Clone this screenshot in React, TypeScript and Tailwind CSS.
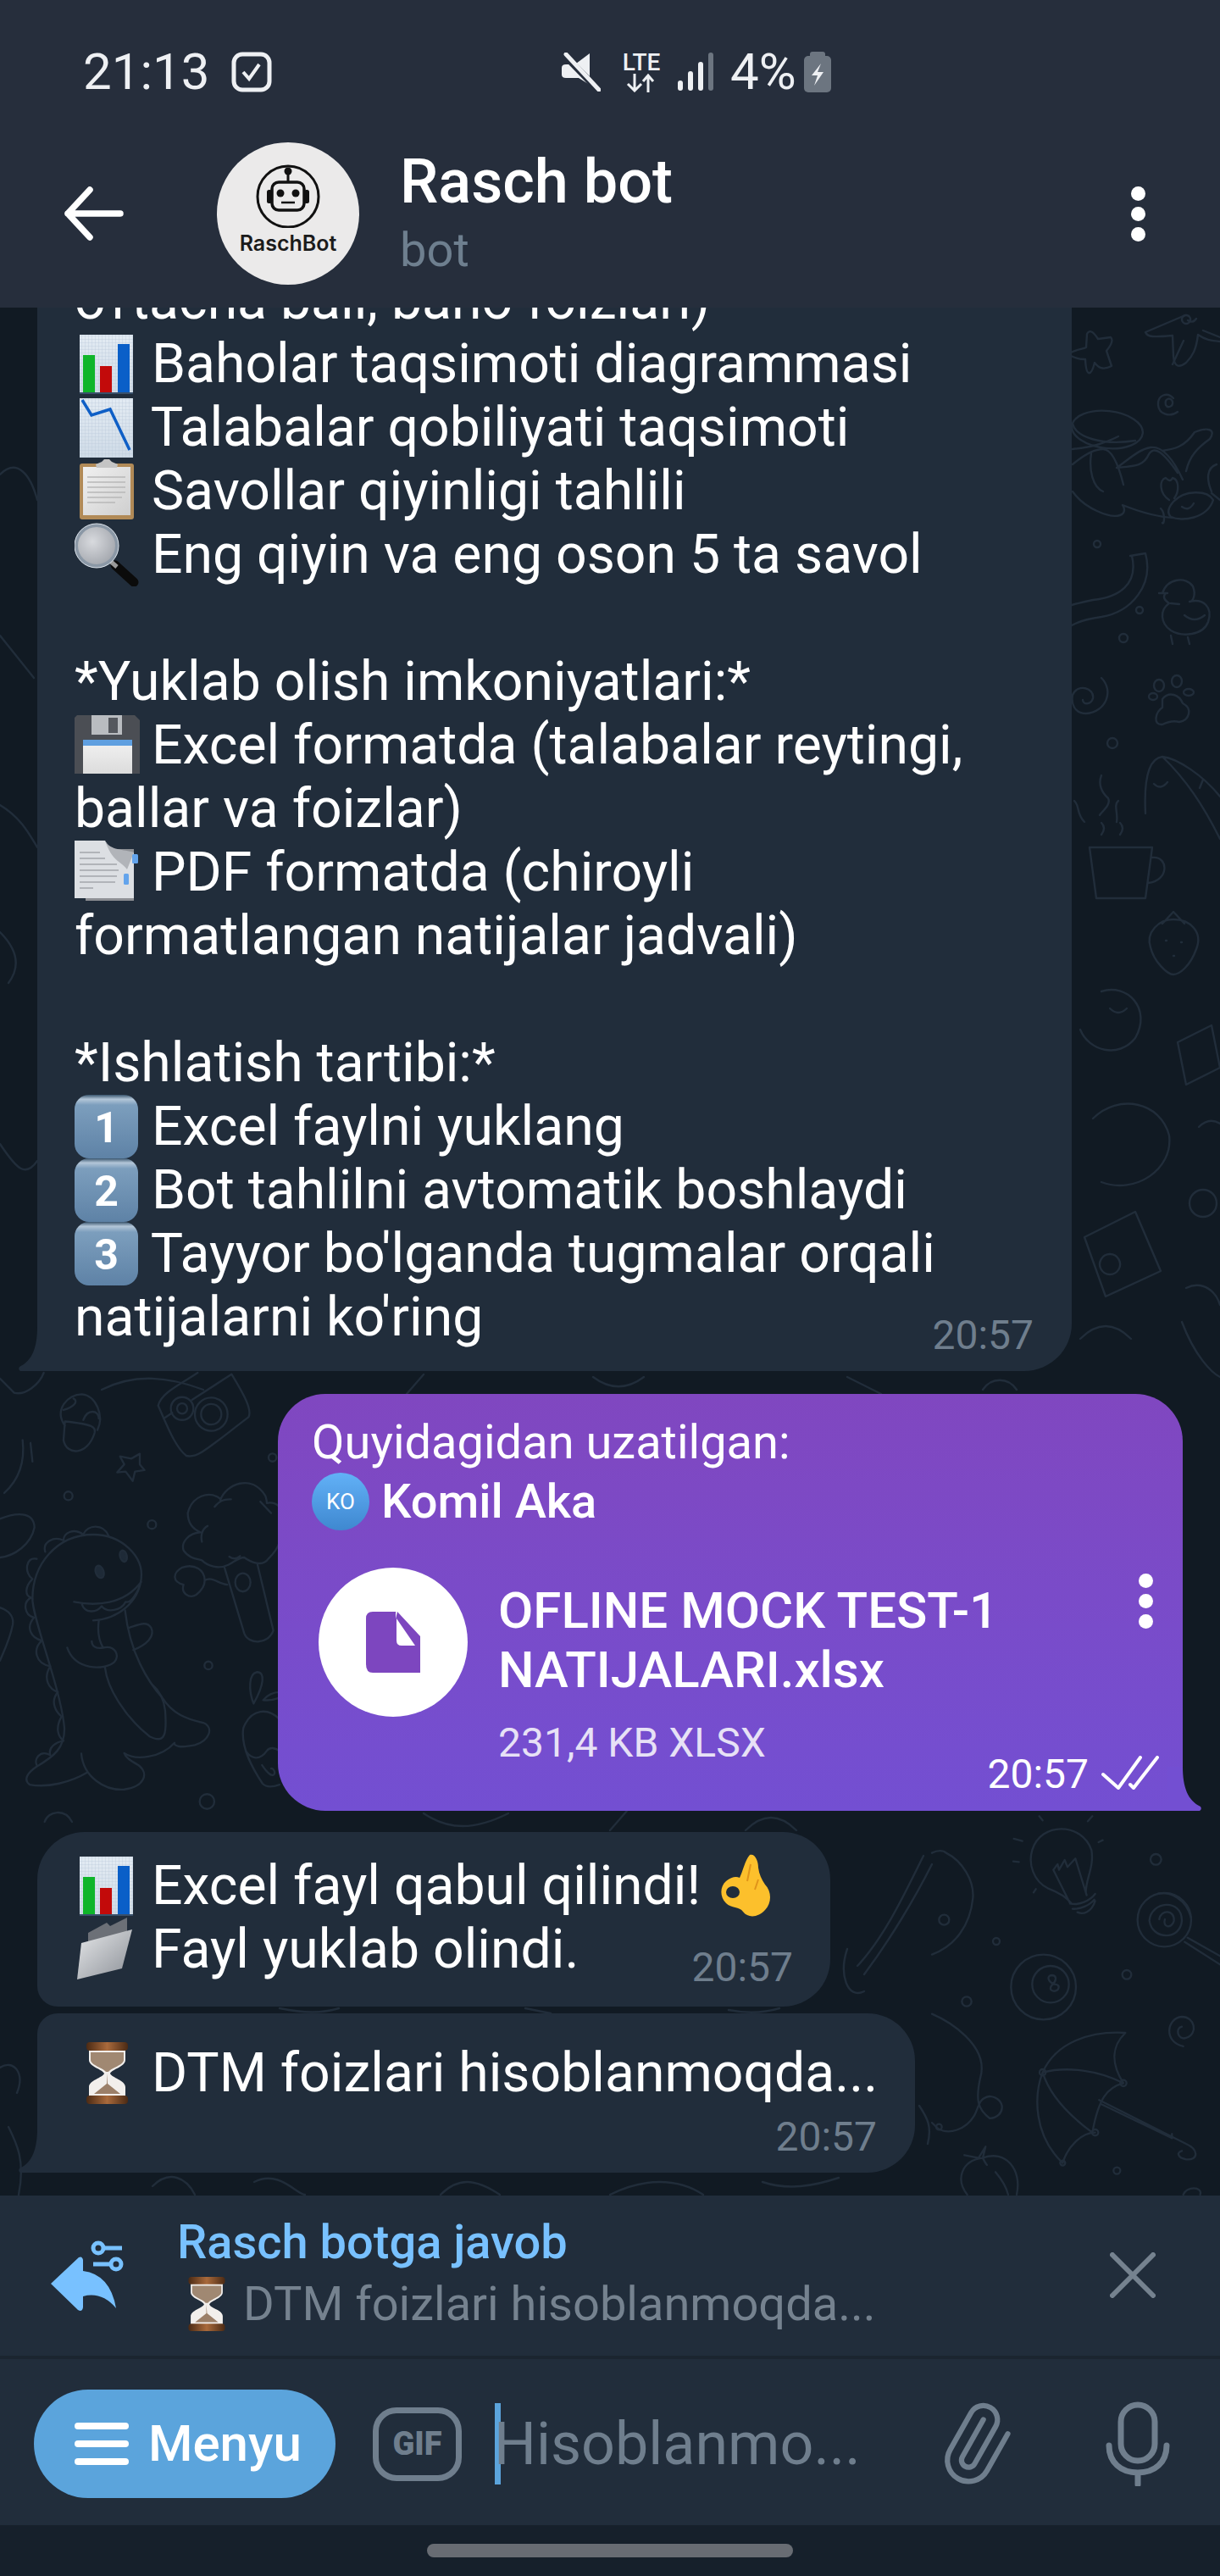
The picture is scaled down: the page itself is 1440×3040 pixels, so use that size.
import React from "react";

const BUBBLE = "#212d3b";

function Paper({ id }: { id: string }) {
  return (
    <>
      <defs>
        <linearGradient id={id} x1="0" y1="0" x2="0" y2="1">
          <stop offset="0" stopColor="#e3ebf3" />
          <stop offset="1" stopColor="#cfdbe7" />
        </linearGradient>
        <pattern id={id + "g"} width="4" height="4" patternUnits="userSpaceOnUse">
          <path d="M4 0H0V4" fill="none" stroke="#b9c8d8" strokeWidth="0.7" />
        </pattern>
      </defs>
      <rect x="6" y="3" width="63" height="70" fill={`url(#${id})`} />
      <rect x="6" y="3" width="63" height="70" fill={`url(#${id}g)`} />
    </>
  );
}

const emojiCls = "inline-block align-top mr-[-2px]";

function BarChart() {
  return (
    <svg width="77" height="75" viewBox="0 0 77 75" className={emojiCls}>
      <Paper id="pa" />
      <rect x="10" y="27" width="14" height="45" fill="#0fb52a" />
      <rect x="30" y="40" width="14" height="32" fill="#c20a0a" />
      <rect x="51" y="14" width="14" height="58" fill="#0a5fc8" />
      <rect x="6" y="71" width="63" height="2" fill="#39506a" />
    </svg>
  );
}
function ChartDown() {
  return (
    <svg width="77" height="75" viewBox="0 0 77 75" className={emojiCls}>
      <Paper id="pb" />
      <path d="M9 5 L20 23 L42 16 L65 64" fill="none" stroke="#0f5fc6" strokeWidth="3.5" />
    </svg>
  );
}
function Clipboard() {
  return (
    <svg width="77" height="75" viewBox="0 0 77 75" className={emojiCls}>
      <defs>
        <linearGradient id="cp" x1="0" y1="0" x2="1" y2="1">
          <stop offset="0" stopColor="#f0f0f0" />
          <stop offset="1" stopColor="#cfcfcf" />
        </linearGradient>
      </defs>
      <rect x="6" y="5" width="64" height="66" rx="3" fill="#b18a57" />
      <rect x="10" y="9" width="56" height="57" fill="url(#cp)" />
      <path d="M25 6 L32 3 L35 0 H41 L44 3 L51 6 L50 10 H26 Z" fill="#c4c4c4" />
      <path d="M15 21 H60 M15 27 H60 M15 33 H60 M15 39 H60 M15 45 H56 M15 51 H48" stroke="#b8b8b8" strokeWidth="1.4" />
    </svg>
  );
}
function Magnifier() {
  return (
    <svg width="77" height="75" viewBox="0 0 77 75" className={emojiCls}>
      <defs>
        <radialGradient id="mg" cx="0.4" cy="0.4" r="0.7">
          <stop offset="0" stopColor="#d8dade" />
          <stop offset="1" stopColor="#9da1a8" />
        </radialGradient>
      </defs>
      <path d="M48 50 L70 70" stroke="#0b0b0b" strokeWidth="11" strokeLinecap="round" />
      <path d="M42 45 L50 52" stroke="#9a9a9a" strokeWidth="5" />
      <circle cx="26" cy="27" r="24" fill="url(#mg)" stroke="#8b98a6" strokeWidth="4" />
      <circle cx="26" cy="27" r="26" fill="none" stroke="#dfe6ee" strokeWidth="1" />
    </svg>
  );
}
function Floppy() {
  return (
    <svg width="77" height="75" viewBox="0 0 77 75" className={emojiCls}>
      <defs>
        <linearGradient id="fl" x1="0" y1="0" x2="0" y2="1">
          <stop offset="0" stopColor="#f2f2f2" />
          <stop offset="1" stopColor="#dcdcdc" />
        </linearGradient>
      </defs>
      <path d="M3 2 H71 L77 8 V71 H0 V5 Z" fill="#4b4e54" />
      <rect x="20" y="2" width="36" height="23" fill="#b9bcc0" />
      <rect x="40" y="5" width="11" height="18" fill="#55585e" />
      <rect x="10" y="31" width="58" height="40" fill="url(#fl)" />
      <rect x="10" y="31" width="58" height="7" fill="#5f9fe0" />
    </svg>
  );
}
function DocEmoji() {
  return (
    <svg width="77" height="75" viewBox="0 0 77 75" className={emojiCls}>
      <path d="M13 10 H70 V71 H13 Z" fill="#8d8f94" />
      <path d="M0 0 H36 C40 8 48 14 62 14 H70 V68 H0 Z" fill="#dcdfe3" />
      <path d="M36 0 C42 12 58 10 70 14 L62 34 C54 24 44 24 36 0 Z" fill="#b1b4b9" />
      <path d="M6 14 H30 M6 21 H36 M6 28 H50 M6 35 H52 M6 42 H50 M6 49 H48 M6 56 H22" stroke="#a3a6ac" strokeWidth="1.3" />
      <rect x="68" y="16" width="7" height="11" rx="1.5" fill="#63a4ec" />
      <rect x="58" y="39" width="6" height="13" rx="1.5" fill="#63a4ec" />
    </svg>
  );
}
function Keycap({ n, id }: { n: string; id: string }) {
  return (
    <svg width="77" height="75" viewBox="0 0 77 75" className={emojiCls}>
      <defs>
        <linearGradient id={id} x1="0" y1="0" x2="0" y2="1">
          <stop offset="0" stopColor="#3a566f" />
          <stop offset="0.07" stopColor="#b3c6d8" />
          <stop offset="0.16" stopColor="#7c9ebd" />
          <stop offset="1" stopColor="#5e82a6" />
        </linearGradient>
      </defs>
      <rect x="0" y="0" width="75" height="75" rx="17" fill={`url(#${id})`} />
      <text x="37.5" y="56" textAnchor="middle" fontFamily="Roboto, sans-serif" fontWeight="700" fontSize="50" fill="#fff">
        {n}
      </text>
    </svg>
  );
}
function OkHand() {
  return (
    <svg width="62" height="75" viewBox="0 0 62 75" className="ml-[6px] inline-block align-top">
      <path
        d="M36 1 C42 -1 46 8 46 16 C47 24 50 30 54 36 C62 44 62 58 54 66 C46 75 34 76 28 68 C24 62 14 64 8 58 C0 50 1 38 8 32 C14 27 20 26 24 28 C28 20 30 8 36 1 Z"
        fill="#fcc02c"
      />
      <path d="M37 12 L33 32 M46 30 L42 42" stroke="#e0941a" strokeWidth="2" fill="none" />
      <ellipse cx="16" cy="45" rx="8" ry="7" fill={BUBBLE} />
    </svg>
  );
}
function Folder() {
  return (
    <svg width="77" height="75" viewBox="0 0 77 75" className={emojiCls}>
      <defs>
        <linearGradient id="fd" x1="0" y1="0" x2="1" y2="1">
          <stop offset="0" stopColor="#e6e8ea" />
          <stop offset="1" stopColor="#8c9097" />
        </linearGradient>
      </defs>
      <path d="M16 18 L38 6 L42 10 L62 0 L62 36 L16 60 Z" fill="#6c7077" />
      <path d="M8 30 L68 14 L56 60 L3 73 Z" fill="url(#fd)" />
    </svg>
  );
}
function Hourglass({ w = 77, h = 75 }: { w?: number; h?: number }) {
  return (
    <svg width={w} height={h} viewBox="0 0 77 75" className={emojiCls}>
      <defs>
        <linearGradient id="hb" x1="0" y1="0" x2="1" y2="0">
          <stop offset="0" stopColor="#4b2a14" />
          <stop offset="0.5" stopColor="#a96a3c" />
          <stop offset="1" stopColor="#4b2a14" />
        </linearGradient>
      </defs>
      <path d="M17 9 H60 V22 C60 30 44 33 42 38 C44 43 60 46 60 54 V66 H17 V54 C17 46 33 43 35 38 C33 33 17 30 17 22 Z" fill="#f2efec" />
      <path d="M19 13 H58 V22 C58 28 44 31 40 36 H37 C33 31 19 28 19 22 Z" fill="#a08872" />
      <path d="M38 38 L39 50 L54 62 H23 L38 50 Z" fill="#9b7f68" />
      <rect x="14" y="1" width="49" height="10" rx="4" fill="url(#hb)" />
      <rect x="14" y="64" width="49" height="10" rx="4" fill="url(#hb)" />
    </svg>
  );
}

function Wallpaper() {
  return (
    <svg
      className="absolute left-0 top-0"
      width="1440"
      height="2228"
      viewBox="0 363 1440 2228"
      fill="none"
      stroke="#212d3a"
      strokeWidth="2.4"
      strokeLinecap="round"
      strokeLinejoin="round"
    >
      {/* right strip */}
      <path d="M1264 416 C1272 412 1278 412 1282 410 L1283 394 C1286 388 1291 392 1296 400 L1311 398 C1315 402 1311 408 1306 414 L1312 432 C1304 436 1298 436 1292 428 C1288 444 1282 446 1281 424 C1274 424 1268 422 1264 420" />
      <path d="M1399 372 L1352 392 C1354 398 1362 398 1384 396 L1385 420 C1386 434 1392 434 1400 428 C1408 420 1412 412 1414 395 C1424 402 1432 402 1440 403" />
      <path d="M1384 430 L1397 402 M1420 390 L1440 398 M1400 372 a5 5 0 1 0 .1 0 M1402 378 q6 4 10 -2" />
      <path d="M1385 470 C1378 462 1366 466 1367 478 C1368 490 1382 492 1390 486 M1376 478 C1378 482 1385 480 1384 474 C1382 468 1374 470 1376 478" />
      <ellipse cx="1307" cy="507" rx="42" ry="22" transform="rotate(6 1307 507)" />
      <path d="M1266 500 C1270 516 1300 526 1340 520 M1266 530 C1285 528 1300 525 1320 515 M1266 548 C1278 538 1290 530 1302 530 C1312 530 1320 548 1326 572 M1288 535 C1285 555 1290 575 1302 580 M1266 580 C1280 600 1310 612 1322 608 C1328 606 1328 600 1325 596 C1345 604 1365 610 1385 611" />
      <path d="M1318 552 C1335 540 1345 530 1358 528 C1372 526 1384 540 1396 566 M1318 552 C1340 550 1350 550 1356 536 C1362 526 1372 532 1390 558 M1372 532 C1385 530 1398 528 1410 510 C1425 504 1436 506 1428 518 C1414 528 1404 538 1400 556" />
      <path d="M1382 610 C1395 616 1425 612 1432 590 C1425 578 1398 578 1385 592 C1378 600 1378 606 1382 610 M1395 598 q8 6 14 -4 M1380 590 C1368 582 1368 566 1376 564 C1380 568 1382 568 1384 564 C1392 566 1392 580 1386 588" />
      <path d="M1430 580 C1424 566 1424 552 1436 548 M1430 582 L1440 590 M1370 600 C1376 606 1374 620 1372 617" />
      <circle cx="1295" cy="642" r="4" />
      <path d="M1334 656 L1352 653 C1362 690 1336 722 1300 728 C1285 730 1272 734 1265 738 M1336 656 C1344 690 1320 705 1290 708 C1280 710 1272 712 1265 714" />
      <circle cx="1345" cy="720" r="4" />
      <circle cx="1326" cy="753" r="5" />
      <path d="M1376 700 L1372 700 C1378 682 1400 680 1408 692 C1412 702 1408 710 1404 710 C1420 706 1432 716 1426 734 C1420 750 1395 752 1382 744 C1370 736 1368 720 1380 712 C1374 708 1372 704 1376 700 Z M1382 712 L1392 713 M1398 726 q12 10 24 0 M1382 750 L1384 760 M1402 752 L1404 760 M1368 700 L1378 700" />
      <path d="M1300 800 C1315 815 1306 840 1282 842 C1268 842 1264 830 1266 820 C1272 806 1292 812 1290 824 C1288 832 1278 832 1278 826" />
      <ellipse cx="1368" cy="809" rx="6" ry="7" />
      <ellipse cx="1389" cy="804" rx="6" ry="7" />
      <ellipse cx="1403" cy="817" rx="6" ry="4" />
      <ellipse cx="1361" cy="822" rx="5" ry="4" />
      <path d="M1372 825 C1380 815 1392 820 1396 830 C1408 836 1404 850 1392 852 C1384 850 1378 852 1372 855 C1360 856 1364 840 1372 835 Z" />
      <circle cx="1313" cy="877" r="6" />
      <path d="M1440 940 C1420 915 1390 895 1372 893 C1356 895 1350 920 1352 960 M1372 893 C1400 920 1420 950 1440 990 M1362 925 q8 8 16 -2 M1420 920 L1416 930" />
      <path d="M1300 915 C1296 925 1300 935 1308 942 C1312 950 1300 958 1298 962 M1320 945 C1314 950 1320 960 1318 970 M1268 945 C1275 952 1270 960 1280 970" />
      {/* cup + strawberry + shapes lower right */}
      <path d="M1286 1000 H1360 L1352 1060 H1294 Z M1360 1012 C1380 1010 1380 1040 1355 1042 M1300 985 q6 -8 0 -14 M1322 985 q6 -8 0 -14" />
      <path d="M1385 1085 C1405 1085 1420 1100 1412 1120 C1405 1140 1392 1150 1385 1150 C1378 1150 1362 1135 1358 1118 C1352 1100 1368 1085 1385 1085 Z M1372 1090 L1385 1076 L1398 1090 M1376 1110 h1 M1394 1112 h1 M1385 1128 h1" />
      <path d="M1300 1170 C1330 1160 1360 1190 1340 1225 C1320 1250 1285 1240 1275 1215 M1310 1190 q10 10 20 0" />
      <path d="M1390 1230 L1430 1210 L1440 1260 L1400 1280 Z" />
      <path d="M1290 1320 C1320 1290 1370 1300 1380 1340 C1385 1380 1340 1410 1300 1395 M1415 1330 q12 -12 25 -4" />
      <circle cx="1420" cy="1420" r="16" />
      <path d="M1280 1460 L1340 1430 L1370 1500 L1305 1530 Z M1310 1480 a12 12 0 1 0 .1 0" />
      <path d="M1400 1520 C1420 1510 1436 1525 1440 1540 M1395 1560 C1410 1600 1430 1620 1440 1625 M1275 1580 q30 -30 60 0" />
      {/* dinosaur region */}
      <g transform="translate(0 1620) scale(.3333 .338)" strokeWidth="7">
        <path d="M0 20 L50 70 C90 80 140 40 155 0" />
        <path d="M230 185 C190 130 240 75 290 75 C340 80 370 150 345 200 M230 170 L225 235 C235 290 310 290 335 210 C340 190 330 180 230 170 M225 130 C260 120 280 100 260 90 M295 165 C310 125 350 130 350 160" />
        <path d="M80 235 C90 320 60 380 15 420 M108 245 L115 310" />
        <circle cx="242" cy="430" r="15" />
        <path d="M425 292 L465 300 L495 283 L495 320 L512 340 L478 345 L470 378 L445 345 L415 348 L440 320 Z" />
        <circle cx="538" cy="530" r="15" />
        <path d="M0 510 C50 490 120 480 122 540 C110 600 50 640 0 645" />
        <path d="M0 820 C30 830 50 850 45 880 C35 930 15 970 0 1005" />
        {/* dino */}
        <path d="M115 790 C115 670 200 565 330 565 C430 565 510 640 500 720 C490 800 420 860 330 865 M262 800 C340 815 440 810 500 730 M290 808 C300 840 340 840 360 815 C380 840 430 830 445 800 C460 805 480 780 495 745" />
        <ellipse cx="353" cy="695" rx="14" ry="22" transform="rotate(-20 353 695)" fill="#1e2a37" />
        <ellipse cx="437" cy="640" rx="12" ry="20" transform="rotate(-15 437 640)" fill="#1e2a37" />
        <path d="M160 625 C150 590 190 570 225 585 C225 560 260 540 295 565 C310 530 365 525 385 570 M130 650 C90 640 85 700 115 720 C85 750 90 780 110 785 C80 800 85 845 120 855 C90 890 110 925 148 935 C115 965 125 1015 178 1025 C150 1070 175 1105 205 1115 C175 1150 200 1185 218 1200 C195 1240 205 1270 225 1285 C195 1290 170 1310 178 1335 C140 1315 120 1350 130 1370" />
        <path d="M115 790 C115 860 215 1100 228 1240 C230 1310 190 1340 130 1375 C100 1395 80 1420 105 1438 C170 1450 250 1430 310 1395" />
        <path d="M288 1330 C295 1410 370 1460 440 1455 C510 1445 530 1400 490 1370 C465 1355 445 1345 440 1328 C480 1355 570 1345 618 1292 C615 1305 640 1310 690 1300 C740 1285 760 1240 720 1222 C660 1210 610 1190 575 1135 C525 1080 460 980 443 830" />
        <path d="M350 865 C345 900 350 935 365 960 C340 965 325 955 325 938 M365 960 C410 950 425 990 405 1010 C370 1040 265 1040 238 960 M372 1030 C380 1100 440 1200 530 1270 C590 1300 590 1250 585 1180 C580 1140 565 1110 540 1090" />
        <path d="M458 890 C490 880 520 865 535 890 C550 920 520 950 472 968" />
        {/* camera */}
        <path d="M700 0 C640 40 570 70 560 115 C590 180 620 260 660 290 C700 300 740 260 880 155 C895 130 860 70 820 5 L680 95" />
        <circle cx="645" cy="125" r="40" />
        <circle cx="645" cy="125" r="18" />
        <circle cx="748" cy="145" r="58" />
        <circle cx="748" cy="145" r="36" />
        <path d="M580 160 L610 140" />
        <circle cx="965" cy="296" r="14" />
        {/* broccoli */}
        <path d="M780 445 C800 390 890 350 940 430 C945 445 945 450 945 455 C965 450 985 460 990 470 M760 468 C775 450 790 440 818 442 M780 440 C740 410 680 430 665 490 C665 520 680 545 710 557 C670 560 640 590 650 620 C670 650 700 650 715 655 C730 670 770 690 810 670 C830 660 845 645 865 645 C885 660 930 680 950 650 C970 630 985 610 990 590 M735 535 C715 545 710 570 715 590 M922 450 L960 490 M812 642 C825 652 840 648 850 640" />
        <path d="M795 680 L865 910 C880 950 950 950 968 900 L912 670" />
        <ellipse cx="860" cy="732" rx="27" ry="32" />
        <path d="M805 740 C770 735 750 710 725 725 C725 690 690 665 645 680 C610 700 610 730 650 740 C640 770 670 790 695 775 C715 760 725 740 725 725" />
        <circle cx="738" cy="1022" r="14" />
        <path d="M898 1155 C880 1110 880 1050 910 1045 C940 1045 935 1090 898 1155 Z M932 1143 C945 1125 970 1115 990 1115 M932 1143 C950 1145 970 1142 990 1135" />
        <path d="M990 1210 C950 1170 890 1170 862 1240 C850 1310 900 1390 930 1435 C945 1450 970 1445 990 1438 M870 1320 C890 1350 920 1355 945 1320 C955 1305 975 1310 990 1320 M928 1370 C945 1395 965 1415 972 1400 C975 1390 965 1380 960 1382" />
        <circle cx="733" cy="1497" r="26" />
        <path d="M158 1568 C170 1530 230 1520 255 1568" />
      </g>
      {/* lower right */}
      <g transform="translate(1100 2100) scale(.3333)" strokeWidth="7">
        <path d="M495 440 C480 420 450 400 410 385 C360 360 340 300 355 250 C385 150 530 150 565 250 C575 310 545 350 545 400 M430 320 L445 300 L450 320 L470 285 L480 310 L508 280 L548 410 M430 320 L490 440 M495 440 C520 445 560 430 578 405 M498 458 C525 460 560 445 575 425 M515 470 C535 480 565 470 578 430" />
        <path d="M290 210 L320 218 M288 290 L308 292 M380 130 L392 145 M552 148 L568 130 M590 222 L605 215 M360 400 L368 388" />
        <circle cx="793" cy="283" r="19" />
        <circle cx="823" cy="497" r="95" />
        <path d="M770 500 C775 430 885 420 885 500 C880 570 780 570 770 500 M805 495 C810 460 860 460 857 500 C850 530 815 525 825 495 M800 405 C840 395 900 420 918 490" />
        <path d="M905 560 L1020 625 M895 575 L1020 655" />
        <path d="M0 260 C20 250 40 250 50 260 C110 290 150 360 145 420 C135 520 80 590 0 620" />
        <circle cx="43" cy="497" r="18" />
        <circle cx="228" cy="573" r="12" />
        <circle cx="395" cy="735" r="115" />
        <circle cx="420" cy="725" r="65" />
        <path d="M432 725 C410 715 405 695 425 693 C445 695 440 715 425 728 C410 745 430 755 445 745 C455 730 445 725 432 725" />
        <circle cx="690" cy="691" r="16" />
        <circle cx="123" cy="786" r="17" />
        <path d="M890 945 C820 930 830 845 885 840 C930 840 945 900 900 915 C870 925 860 880 885 875" />
        <path d="M0 830 C70 860 190 940 175 1040 C150 1140 165 1170 205 1200 C260 1195 265 1130 205 1122 C165 1125 165 1165 150 1190 C120 1240 60 1260 20 1235 M0 1215 L20 1235" />
        <circle cx="25" cy="1230" r="10" />
        <path d="M392 1037 C440 930 560 890 685 897 C640 940 630 1000 678 1075 C620 1090 590 1130 568 1250 C500 1200 420 1130 392 1037 Z M392 1037 C480 1015 590 1030 678 1075 M392 1037 C360 1120 360 1260 463 1358 C480 1300 530 1250 578 1250" />
        <circle cx="392" cy="1037" r="11" />
        <circle cx="678" cy="1075" r="11" />
        <circle cx="578" cy="1250" r="11" />
        <circle cx="463" cy="1358" r="9" />
        <path d="M592 1135 L900 1290 C945 1310 945 1350 900 1345 C870 1340 865 1320 885 1315 M600 1150 L850 1270 M850 1255 L850 1270" />
        <circle cx="655" cy="1385" r="12" />
        <path d="M115 1330 L165 1340 L190 1300 L180 1340 C260 1310 320 1380 300 1470 M125 1470 C85 1420 100 1350 180 1340 C185 1350 190 1360 195 1365 M225 1390 C250 1420 265 1450 270 1470" />
        <path d="M890 1470 C900 1440 960 1440 950 1470" />
      </g>
      <path d="M1100 2200 C1080 2240 1050 2290 1020 2330 M1090 2190 C1070 2230 1045 2285 1012 2320 M1000 2300 C990 2330 1000 2360 1020 2350 M990 2440 C1000 2460 1010 2470 1030 2460 M1085 2485 C1095 2500 1100 2510 1095 2530" />
      <path d="M0 560 C20 540 36 560 44 590 M0 750 L40 800 M0 950 C25 965 35 985 44 1000 M0 1350 C20 1380 30 1390 44 1370 M0 1100 C20 1120 25 1140 10 1160 M0 2440 C15 2430 30 2445 20 2470 M10 2510 C20 2530 30 2550 22 2590" />
      <path d="M180 2580 C200 2560 220 2570 230 2590 M300 2575 C330 2560 350 2590 360 2590 M520 2590 C540 2570 560 2570 590 2590 M720 2590 C760 2570 800 2570 830 2590 M900 2575 C930 2585 960 2580 990 2570" />
      <path d="M120 1640 C160 1620 200 1625 240 1640 M1000 1625 L1040 1645 M1160 1640 C1170 1625 1190 1625 1200 1640 M700 1625 C720 1640 740 1640 760 1625 M480 1645 L500 1622" />
      <path d="M500 2140 C530 2160 560 2160 600 2140 M720 2160 L740 2137 M880 2160 C900 2140 920 2140 940 2160 M330 2370 C360 2376 380 2376 400 2370 M620 2370 L650 2376 M860 2372 C880 2376 900 2376 920 2370" />
    </svg>
  );
}

function Bubble({ className, children }: { className: string; children: React.ReactNode }) {
  return <div className={"relative shrink-0 bg-[#212d3b] " + className}>{children}</div>;
}

function Tail({ color = "#212d3b" }: { color?: string }) {
  return (
    <svg className="absolute bottom-0 left-[-22px]" width="40" height="52" viewBox="0 0 40 52">
      <path d="M22 0 C22 24 16 40 1 47 Q-1 50 2 52 H40 V0 Z" fill={color} />
    </svg>
  );
}

function Time({ className, children }: { className: string; children: React.ReactNode }) {
  return <span className={"absolute text-[48px] leading-[56px] " + className}>{children}</span>;
}

function StatusBar() {
  return (
    <div className="flex h-[168px] items-center pt-[2px] text-[#eef0f3]">
      <span className="ml-[98px] w-[152px] text-[60px] leading-[70px]">21:13</span>
      <svg className="ml-[23px]" width="48" height="50" viewBox="0 0 48 50" fill="none" stroke="#eef0f3" strokeWidth="5">
        <rect x="3" y="4" width="42" height="42" rx="10" />
        <path d="M14 25 L21 33 L33 16" strokeWidth="4" />
      </svg>
      <svg className="ml-[342px]" width="46" height="46" viewBox="0 0 46 46">
        <path d="M33 1 V30 L17 13 Z M0 18 Q0 14 5 14 H12 L33 36 V38 L20 30 H5 Q0 30 0 26 Z" fill="#eef0f3" />
        <path d="M3 3 L43 44" stroke="#262e3c" strokeWidth="8" />
        <path d="M5 2 L44 44" stroke="#eef0f3" strokeWidth="5" strokeLinecap="round" />
      </svg>
      <div className="ml-[25px] flex w-[46px] flex-col items-center">
        <span className="text-[28px] leading-[26px] font-medium">LTE</span>
        <svg width="36" height="22" viewBox="0 0 36 22" fill="none" stroke="#eef0f3" strokeWidth="3">
          <path d="M10 0 V19 M2 12 L10 20 L18 12 M26 22 V2 M20 9 L26 2 L32 9" />
        </svg>
      </div>
      <svg className="ml-[19px]" width="44" height="46" viewBox="0 0 44 46">
        <rect x="1" y="33" width="6" height="12" rx="3" fill="#eef0f3" />
        <rect x="13" y="22" width="6" height="23" rx="3" fill="#eef0f3" />
        <rect x="25" y="11" width="6" height="34" rx="3" fill="#eef0f3" />
        <rect x="37" y="0" width="6" height="45" rx="3" fill="#6c7580" />
      </svg>
      <span className="ml-[19px] w-[86px] text-[60px] leading-[70px]">4%</span>
      <svg width="34" height="48" viewBox="0 0 34 48">
        <rect x="8" y="0" width="18" height="8" rx="3" fill="#6c7580" />
        <rect x="1" y="5" width="32" height="43" rx="5" fill="#6c7580" />
        <path d="M21 14 L10 28 H17 L13 40 L24 24 H17 Z" fill="#eef0f3" />
      </svg>
    </div>
  );
}

function Header() {
  return (
    <div className="relative z-10 h-[363px] shrink-0 bg-[#262e3c]">
      <StatusBar />
      <div className="flex h-[168px] items-center">
        <svg className="ml-[76px]" width="70" height="64" viewBox="0 0 70 64" fill="none" stroke="#fff" strokeWidth="7.5" strokeLinecap="round" strokeLinejoin="round">
          <path d="M4 32 H66 M30 4 L4 32 L30 60" />
        </svg>
        <div className="ml-[110px] flex h-[168px] w-[168px] flex-col items-center rounded-full bg-[#ebeaea] pt-[23px]">
          <svg width="80" height="78" viewBox="0 0 80 78" fill="none" stroke="#111" strokeWidth="3">
            <circle cx="40" cy="41" r="36" />
            <circle cx="40" cy="11" r="4.5" fill="#111" stroke="none" />
            <path d="M40 14 V24" />
            <rect x="21" y="24" width="38" height="33" rx="8" strokeWidth="3.5" />
            <rect x="15" y="33" width="6" height="16" rx="2.5" fill="#111" stroke="none" />
            <rect x="59" y="33" width="6" height="16" rx="2.5" fill="#111" stroke="none" />
            <circle cx="31" cy="37" r="4.5" fill="#111" stroke="none" />
            <circle cx="49" cy="37" r="4.5" fill="#111" stroke="none" />
            <path d="M32 48 H48" strokeWidth="2.5" />
          </svg>
          <span className="mt-[4px] font-['Inter',sans-serif] text-[25px] leading-[28px] font-semibold text-[#1b1b1b]">RaschBot</span>
        </div>
        <div className="ml-[48px] flex flex-col">
          <span className="text-[72px] leading-[84px] font-medium text-white">Rasch bot</span>
          <span className="mt-[2px] text-[56px] leading-[72px] text-[#6e7f8f]">bot</span>
        </div>
        <div className="ml-auto mr-[88px] flex flex-col gap-[7px]">
          <span className="h-[17px] w-[17px] rounded-full bg-white" />
          <span className="h-[17px] w-[17px] rounded-full bg-white" />
          <span className="h-[17px] w-[17px] rounded-full bg-white" />
        </div>
      </div>
    </div>
  );
}

function Chat() {
  const line = "h-[75px] leading-[75px] whitespace-nowrap";
  return (
    <div className="relative flex min-h-0 flex-1 flex-col justify-end overflow-hidden bg-[#111a23] pb-[27px] text-[64.3px] text-white">
      <Wallpaper />
      <Bubble className="ml-[44px] w-[1221px] rounded-[56px] rounded-bl-none pb-[26px] pl-[44px] pt-[26px]">
        <Tail />
        <div className="w-[1090px] leading-[75px]">
          <div>o'rtacha ball, baho foizlari)</div>
          <div className={line}><BarChart /> Baholar taqsimoti diagrammasi</div>
          <div className={line}><ChartDown /> Talabalar qobiliyati taqsimoti</div>
          <div className={line}><Clipboard /> Savollar qiyinligi tahlili</div>
          <div className={line}><Magnifier /> Eng qiyin va eng oson 5 ta savol</div>
          <div className="h-[75px]" />
          <div>*Yuklab olish imkoniyatlari:*</div>
          <div><Floppy /> Excel formatda (talabalar reytingi, ballar va foizlar)</div>
          <div><DocEmoji /> PDF formatda (chiroyli formatlangan natijalar jadvali)</div>
          <div className="h-[75px]" />
          <div>*Ishlatish tartibi:*</div>
          <div className={line}><Keycap n="1" id="k1" /> Excel faylni yuklang</div>
          <div className={line}><Keycap n="2" id="k2" /> Bot tahlilni avtomatik boshlaydi</div>
          <div><Keycap n="3" id="k3" /> Tayyor bo'lganda tugmalar orqali natijalarni ko'ring</div>
        </div>
        <Time className="bottom-[14px] right-[45px] text-[#6f7e8d]">20:57</Time>
      </Bubble>

      <div className="relative ml-[328px] mt-[27px] w-[1068px] shrink-0 rounded-[56px] rounded-br-none bg-linear-to-b from-[#8047c0] to-[#734fd2] pb-[45px] pt-[23px]">
        <svg className="absolute bottom-0 right-[-22px]" width="40" height="52" viewBox="0 0 40 52">
          <path d="M18 0 C18 24 24 40 39 47 Q41 50 38 52 H0 V0 Z" fill="#734fd2" />
        </svg>
        <div className="pl-[40px] text-[56px] leading-[68px]">Quyidagidan uzatilgan:</div>
        <div className="mt-[2px] flex h-[68px] items-center pl-[40px]">
          <span className="flex h-[68px] w-[68px] items-center justify-center rounded-full bg-linear-to-b from-[#62b1f7] to-[#3f88d0] text-[26px] font-normal">KO</span>
          <span className="ml-[14px] text-[56px] font-medium leading-[68px]">Komil Aka</span>
        </div>
        <div className="mt-[44px] flex pl-[48px]">
          <div className="flex h-[176px] w-[176px] items-center justify-center rounded-full bg-white">
            <svg width="64" height="72" viewBox="0 0 64 72">
              <path d="M8 0 H35 L64 46 V62 Q64 72 54 72 H8 Q0 72 0 62 V8 Q0 0 8 0 Z" fill="#7d46bf" />
              <path d="M35 0 L64 30 V46 H46 Q35 46 35 36 Z" fill="#fff" />
              <path d="M37 0 L64 29 V72 H30 V30 Z" fill="#7d46bf" />
              <path d="M36 8 L58 40 H42 Q36 40 36 34 Z" fill="#fff" />
            </svg>
          </div>
          <div className="ml-[36px] pt-[16px]">
            <div className="w-[640px] text-[60px] font-medium leading-[70px]">OFLINE MOCK TEST-1 NATIJALARI.xlsx</div>
            <div className="mt-[16px] text-[48px] leading-[70px] text-[#e7e1f6]">231,4 KB XLSX</div>
          </div>
        </div>
        <div className="absolute right-[35px] top-[212px] flex flex-col gap-[7px]">
          <span className="h-[17px] w-[17px] rounded-full bg-white" />
          <span className="h-[17px] w-[17px] rounded-full bg-white" />
          <span className="h-[17px] w-[17px] rounded-full bg-white" />
        </div>
        <Time className="bottom-[15px] right-[111px] text-white">20:57</Time>
        <svg className="absolute bottom-[25px] right-[28px]" width="68" height="40" viewBox="0 0 68 40" fill="none" stroke="#fff" strokeWidth="4" strokeLinecap="round" strokeLinejoin="round">
          <path d="M2 22 L20 38 L46 2 M34 34 L38 38 L66 2" />
        </svg>
      </div>

      <Bubble className="ml-[44px] mt-[25px] w-[936px] rounded-[56px] rounded-bl-[24px] pb-[30px] pl-[44px] pt-[26px]">
        <div className={line}><BarChart /> Excel fayl qabul qilindi! <OkHand /></div>
        <div className={line}><Folder /> Fayl yuklab olindi.</div>
        <Time className="bottom-[18px] right-[44px] text-[#6f7e8d]">20:57</Time>
      </Bubble>

      <Bubble className="ml-[44px] mt-[8px] h-[188px] w-[1036px] rounded-[56px] rounded-bl-none rounded-tl-[24px] pl-[44px] pt-[33px]">
        <Tail />
        <div className={line}><Hourglass /> DTM foizlari hisoblanmoqda...</div>
        <Time className="bottom-[14px] right-[45px] text-[#6f7e8d]">20:57</Time>
      </Bubble>
    </div>
  );
}

function ReplyPanel() {
  return (
    <div className="flex h-[189px] shrink-0 items-center bg-[#212d3b] pb-[2px]">
      <svg className="ml-[55px]" width="95" height="95" viewBox="55 2625 95 95">
        <path d="M60 2683 L93 2652 Q97 2650 98 2655 L98 2668 Q130 2672 137 2712 Q120 2692 98 2698 L98 2711 Q97 2717 92 2714 Z" fill="#78c1ff" />
        <g fill="none" stroke="#78c1ff" strokeWidth="5">
          <circle cx="116" cy="2641" r="6" />
          <path d="M122 2641 H144 M110 2660 H131" />
          <circle cx="137" cy="2660" r="6" />
        </g>
      </svg>
      <div className="ml-[59px] flex flex-col">
        <span className="text-[56px] font-medium leading-[66px] text-[#78c1ff]">Rasch botga javob</span>
        <div className="mt-[3px] flex h-[74px] items-center text-[56px] leading-[74px] text-[#75828f]">
          <Hourglass w={70} h={66} />
          <span className="ml-[10px]">DTM foizlari hisoblanmoqda...</span>
        </div>
      </div>
      <svg className="ml-auto mr-[76px]" width="54" height="54" viewBox="0 0 54 54" fill="none" stroke="#75828f" strokeWidth="6" strokeLinecap="round">
        <path d="M3 3 L51 51 M51 3 L3 51" />
      </svg>
    </div>
  );
}

function InputBar() {
  return (
    <div className="flex h-[200px] shrink-0 items-center border-t-[4px] border-[#1b2530] bg-[#212d3b] pt-[4px]">
      <div className="ml-[40px] flex h-[128px] w-[356px] items-center rounded-full bg-[#5ba4dc] pl-[48px]">
        <div className="flex w-[64px] flex-col gap-[13px]">
          <span className="h-[8px] rounded-full bg-white" />
          <span className="h-[8px] rounded-full bg-white" />
          <span className="h-[8px] rounded-full bg-white" />
        </div>
        <span className="ml-[23px] text-[60px] font-medium leading-[70px] text-white">Menyu</span>
      </div>
      <div className="ml-[44px] flex h-[87px] w-[105px] items-center justify-center rounded-[28px] border-[7px] border-[#6f7e8d] text-[38px] font-black text-[#6f7e8d]">GIF</div>
      <div className="ml-[39px] h-[96px] w-[7px] bg-[#5ba4dc]" />
      <span className="ml-[-8px] text-[70px] leading-[80px] text-[#6f7e8d]">Hisoblanmo...</span>
      <svg className="ml-auto" width="100" height="100" viewBox="0 0 24 24" fill="none" stroke="#6f7e8d" strokeWidth="1.5" strokeLinecap="round">
        <g transform="rotate(-15 12 12)">
          <path d="m16 6-8.414 8.586a2 2 0 0 0 2.829 2.829l8.414-8.586a4 4 0 1 0-5.657-5.657l-8.379 8.551a6 6 0 1 0 8.485 8.485l8.379-8.551" />
        </g>
      </svg>
      <svg className="ml-[104px] mr-[59px]" width="76" height="100" viewBox="0 0 76 100" fill="none" stroke="#6f7e8d" strokeWidth="7" strokeLinecap="round">
        <rect x="18" y="4" width="40" height="66" rx="20" />
        <path d="M4 52 C4 72 18 84 38 84 C58 84 72 72 72 52 M38 84 V98" />
      </svg>
    </div>
  );
}

export default function App() {
  return (
    <div className="flex h-[3040px] w-[1440px] flex-col overflow-hidden bg-[#111a23] font-['Roboto',sans-serif]">
      <Header />
      <Chat />
      <ReplyPanel />
      <InputBar />
      <div className="flex h-[60px] shrink-0 items-start justify-center bg-[#16202b] pt-[22px]">
        <div className="h-[16px] w-[432px] rounded-full bg-[#686c73]" />
      </div>
    </div>
  );
}
